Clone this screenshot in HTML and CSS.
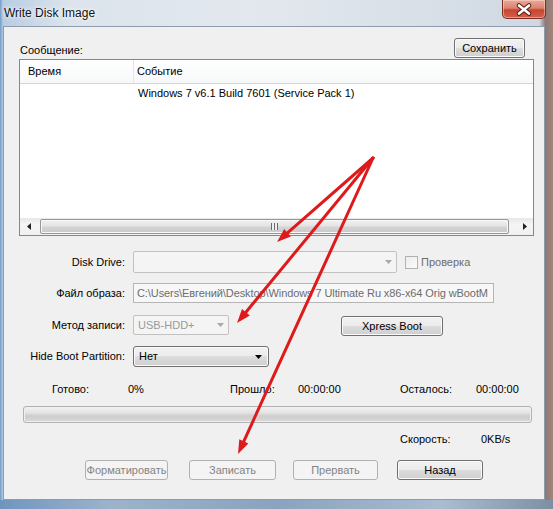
FILE: index.html
```html
<!DOCTYPE html>
<html lang="ru">
<head>
    <meta charset="UTF-8">
    <title>Write Disk Image</title>
    <link rel="stylesheet" href="styles.css">
</head>
<body>
    <div class="window">
        <div class="titlebar">
            <span class="title">Write Disk Image</span>
            <div class="close">
                <svg width="44" height="19" viewBox="0 0 44 19">
                    <path d="M17 5.5 L27 13.5 M27 5.5 L17 13.5" stroke="#5a1a10" stroke-width="4.6" stroke-linecap="round"/>
                    <path d="M17 5.5 L27 13.5 M27 5.5 L17 13.5" stroke="#ffffff" stroke-width="2.6" stroke-linecap="round"/>
                </svg>
            </div>
        </div>

        <div class="client">
            <div class="msg-row">
                <span class="msg-label">Сообщение:</span>
                <button class="btn save">Сохранить</button>
            </div>

            <div class="listview">
                <div class="lv-header">
                    <div class="col col-time">Время</div>
                    <div class="col col-event">Событие</div>
                </div>
                <div class="lv-rows">
                    <div class="lv-row">
                        <div class="cell col-time"></div>
                        <div class="cell col-event">Windows 7 v6.1 Build 7601 (Service Pack 1)</div>
                    </div>
                </div>
                <div class="hscroll">
                    <div class="sb-arrow">
                        <svg width="4" height="7" viewBox="0 0 4 7"><path d="M4 0V7L0 3.5z" fill="#222"/></svg>
                    </div>
                    <div class="sb-track">
                        <div class="sb-thumb"><span class="grip"></span></div>
                    </div>
                    <div class="sb-arrow">
                        <svg width="4" height="7" viewBox="0 0 4 7"><path d="M0 0V7L4 3.5z" fill="#222"/></svg>
                    </div>
                </div>
            </div>

            <div class="field-row row-drive">
                <label class="field-label">Disk Drive:</label>
                <div class="combo disabled drive-combo">
                    <span class="combo-text"></span>
                    <svg class="combo-arrow" width="7" height="4" viewBox="0 0 7 4"><path d="M0 0h7L3.5 4z" fill="#a8a8a8"/></svg>
                </div>
                <span class="checkbox"></span>
                <span class="check-label">Проверка</span>
            </div>

            <div class="field-row row-image">
                <label class="field-label">Файл образа:</label>
                <div class="textbox">C:\Users\Евгений\Desktop\Windows 7 Ultimate Ru x86-x64 Orig wBootM</div>
            </div>

            <div class="field-row row-method">
                <label class="field-label">Метод записи:</label>
                <div class="combo disabled method-combo">
                    <span class="combo-text">USB-HDD+</span>
                    <svg class="combo-arrow" width="7" height="4" viewBox="0 0 7 4"><path d="M0 0h7L3.5 4z" fill="#a8a8a8"/></svg>
                </div>
                <button class="btn xpress">Xpress Boot</button>
            </div>

            <div class="field-row row-hide">
                <label class="field-label">Hide Boot Partition:</label>
                <div class="combo active hide-combo">
                    <span class="combo-text">Нет</span>
                    <svg class="combo-arrow" width="7" height="4" viewBox="0 0 7 4"><path d="M0 0h7L3.5 4z" fill="#000"/></svg>
                </div>
            </div>

            <div class="status-row">
                <span class="st w76">Готово:</span>
                <span class="st w102">0%</span>
                <span class="st w68">Прошло:</span>
                <span class="st w102">00:00:00</span>
                <span class="st w76">Осталось:</span>
                <span class="st">00:00:00</span>
            </div>

            <div class="progress"></div>

            <div class="speed-row">
                <span class="st w81">Скорость:</span>
                <span class="st">0KB/s</span>
            </div>

            <div class="button-row">
                <button class="btn disabled b-format">Форматировать</button>
                <button class="btn disabled b-write">Записать</button>
                <button class="btn disabled b-abort">Прервать</button>
                <button class="btn b-back">Назад</button>
            </div>
        </div>

        <div class="frame-bottom"></div>

        <!-- red annotation arrows drawn over the dialog -->
        <svg class="arrows" width="553" height="509" viewBox="0 0 553 509">
            <g stroke="#de1a1a" stroke-width="3" stroke-linecap="round" fill="none">
                <path d="M373 158 L287.5 232.8"/>
                <path d="M373 158 L245.9 312.2"/>
                <path d="M373 158 L243.8 441.3"/>
            </g>
            <g fill="#de1a1a">
                <polygon points="277,242 290.8,236.6 284.2,229.0"/>
                <polygon points="237,323 249.8,315.4 242.0,309.0"/>
                <polygon points="238,454 248.4,443.4 239.3,439.2"/>
            </g>
        </svg>
    </div>
</body>
</html>
```

FILE: styles.css
```css
body {
    margin: 0;
    padding: 0;
    font-family: "Liberation Sans", Arial, sans-serif;
    font-size: 11px;
    line-height: 13px;
    color: #000;
}

.window {
    position: relative;
    width: 553px;
    height: 509px;
    overflow: hidden;
    background: linear-gradient(90deg, #6f9bc9 0, #b7cce2 3px, #dbe3ec 12%, #e3e8ee 45%, #d9e0e8 75%, #cfd8e2 97.5%, #8c7a76 98.6%, #a3857b 100%);
}

/* Title bar */
.titlebar {
    display: flex;
    align-items: flex-start;
    height: 26px;
}

.title {
    padding-left: 4px;
    font-size: 12px;
    line-height: 26px;
    color: #111;
    text-shadow: 0 0 6px #fff, 0 0 3px #fff;
}

.close {
    margin-left: auto;
    margin-right: 7px;
    width: 44px;
    height: 19px;
    box-sizing: border-box;
    border: 1px solid #7a2b22;
    border-top: none;
    border-radius: 0 0 5px 5px;
    background: linear-gradient(#e9a99b 0, #dc8270 45%, #c7452f 55%, #d0604a 100%);
    box-shadow: inset 0 0 0 1px rgba(255, 220, 210, 0.5);
}

.close svg {
    display: block;
    margin-left: -1px;
}

/* Client area */
.client {
    margin-left: 3px;
    width: 542px;
    height: 474px;
    box-sizing: border-box;
    border: 1px solid #8e9cab;
    background: #f0f0f0;
}

.frame-bottom {
    height: 9px;
    background: linear-gradient(90deg, #6f95bf 0, #9cb3cb 20%, #8aa3be 50%, #a9bcd0 80%, #7e8fa3 100%);
}

/* Buttons */
.btn {
    box-sizing: border-box;
    height: 20px;
    padding: 0;
    border: 1px solid #707070;
    border-radius: 3px;
    background: linear-gradient(#f2f2f2 0, #ebebeb 50%, #dddddd 50%, #cfcfcf 100%);
    box-shadow: inset 0 0 0 1px #fbfbfb;
    font-family: "Liberation Sans", Arial, sans-serif;
    font-size: 11px;
    color: #000;
    white-space: nowrap;
    overflow: hidden;
}

.btn.disabled {
    border-color: #adb2b5;
    background: #f4f4f4;
    box-shadow: none;
    color: #838383;
}

/* Top row */
.msg-row {
    display: flex;
    justify-content: space-between;
    align-items: flex-start;
    margin: 11px 0 0 15px;
    width: 515px;
    height: 21px;
}

.msg-label {
    padding: 6px 0 0 1px;
}

.save {
    width: 71px;
    height: 20px;
    margin-right: 9px;
}

/* List view */
.listview {
    display: flex;
    flex-direction: column;
    margin-left: 15px;
    width: 515px;
    height: 177px;
    box-sizing: border-box;
    border: 1px solid #828790;
    background: #fff;
}

.lv-header {
    display: flex;
    height: 23px;
    border-bottom: 1px solid #d5d5d5;
    background: linear-gradient(#ffffff, #f7f8fa);
}

.col {
    line-height: 23px;
}

.col-time {
    width: 106px;
    padding-left: 8px;
}

.lv-header .col-time {
    border-right: 1px solid #e3e5e8;
    width: 105px;
}

.col-event {
    padding-left: 3px;
}

.lv-rows {
    flex: 1;
}

.lv-row {
    display: flex;
    height: 19px;
    line-height: 19px;
}

.lv-row .col-event {
    padding-left: 4px;
}

.hscroll {
    display: flex;
    height: 17px;
    background: linear-gradient(#e8e8e8, #f5f5f5 40%, #f0f0f0);
}

.sb-arrow {
    display: flex;
    align-items: center;
    justify-content: center;
    width: 17px;
}

.sb-track {
    flex: 1;
    display: flex;
    padding: 0 6px 0 3px;
}

.sb-thumb {
    display: flex;
    align-items: center;
    justify-content: center;
    width: 469px;
    margin: 1px 0;
    box-sizing: border-box;
    border: 1px solid #979797;
    border-radius: 2px;
    background: linear-gradient(#f1f1f1 0, #e4e4e4 45%, #d4d4d4 55%, #c9c9c9 100%);
    box-shadow: inset 0 0 0 1px #f8f8f8;
}

.grip {
    width: 7px;
    height: 7px;
    background: repeating-linear-gradient(90deg, #6a6a6a 0, #6a6a6a 1px, #eeeeee 1px, #eeeeee 3px);
}

/* Form rows */
.field-row {
    display: flex;
    align-items: center;
}

.field-label {
    width: 121px;
    margin-right: 8px;
    text-align: right;
}

.row-drive {
    margin-top: 15px;
    height: 22px;
}

.row-image {
    margin-top: 10px;
    height: 20px;
}

.row-method {
    margin-top: 12px;
    height: 20px;
}

.row-hide {
    margin-top: 11px;
    height: 21px;
}

.combo {
    display: flex;
    align-items: center;
    box-sizing: border-box;
    height: 100%;
    border-radius: 2px;
}

.combo.disabled {
    border: 1px solid #c2c2c2;
    background: #f4f4f4;
    color: #9a9a9a;
}

.combo.active {
    border: 1px solid #707070;
    border-radius: 3px;
    background: linear-gradient(#f2f2f2 0, #ebebeb 50%, #dddddd 50%, #cfcfcf 100%);
    box-shadow: inset 0 0 0 1px #fbfbfb;
}

.combo-text {
    flex: 1;
    padding-left: 4px;
}

.combo-arrow {
    margin-right: 4px;
}

.drive-combo {
    width: 264px;
}

.method-combo {
    width: 96px;
}

.hide-combo {
    width: 136px;
}

.hide-combo .combo-text {
    padding-left: 5px;
}

.hide-combo .combo-arrow {
    margin-right: 6px;
}

.checkbox {
    width: 13px;
    height: 13px;
    margin-left: 8px;
    box-sizing: border-box;
    border: 1px solid #b1b1b1;
    background: linear-gradient(135deg, #ececec, #fbfbfb);
}

.check-label {
    margin-left: 3px;
    color: #6d6d6d;
}

.textbox {
    width: 361px;
    height: 100%;
    box-sizing: border-box;
    padding: 0 0 0 3px;
    border: 1px solid #b5b5b5;
    background: #f7f7f7;
    color: #6d6d6d;
    line-height: 18px;
    letter-spacing: -0.09px;
    white-space: nowrap;
}

.xpress {
    width: 102px;
    margin-left: 112px;
    margin-top: 2px;
}

/* Status area */
.status-row {
    display: flex;
    margin: 16px 0 0 48px;
}

.st {
    display: inline-block;
}

.w68 { width: 68px; }
.w76 { width: 76px; }
.w81 { width: 81px; }
.w102 { width: 102px; }

.progress {
    margin: 10px 0 0 19px;
    width: 509px;
    height: 17px;
    box-sizing: border-box;
    border: 1px solid #b2b2b2;
    border-radius: 3px;
    background: linear-gradient(#f3f3f3 0, #e2e2e2 40%, #cdcdcd 60%, #d9d9d9 100%);
    box-shadow: inset 0 0 0 1px #f0f0f0;
}

.speed-row {
    display: flex;
    margin: 10px 0 0 396px;
}

.button-row {
    display: flex;
    margin: 14px 0 0 81px;
}

.b-format { width: 83px; }
.b-write { width: 87px; margin-left: 21px; }
.b-abort { width: 85px; margin-left: 17px; }
.b-back { width: 86px; margin-left: 19px; }

/* annotation overlay */
.arrows {
    position: absolute;
    top: 0;
    left: 0;
    pointer-events: none;
}
```
